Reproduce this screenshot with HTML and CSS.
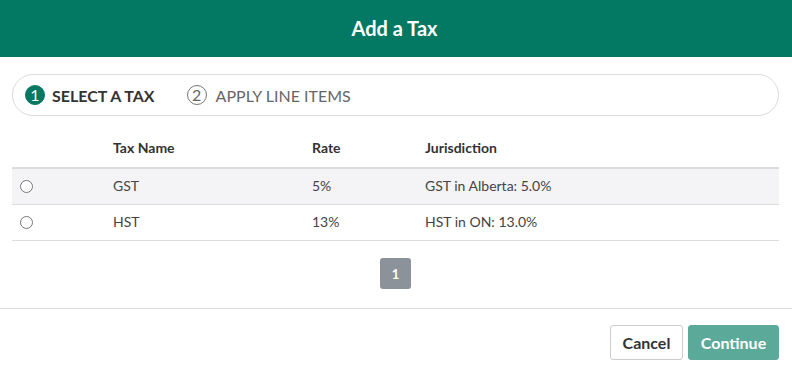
FILE: index.html
```html
<!DOCTYPE html>
<html>
<head>
<meta charset="utf-8">
<link rel="stylesheet" href="styles.css">
</head>
<body>
<div class="modal">
  <header class="modal-header">Add a Tax</header>
  <div class="modal-body">
    <div class="stepper">
      <div class="step active"><span class="step-num">1</span><span class="step-label">SELECT A TAX</span></div>
      <div class="step pending"><span class="step-num">2</span><span class="step-label">APPLY LINE ITEMS</span></div>
    </div>
    <div class="table">
      <div class="row head">
        <div class="cell"></div>
        <div class="cell">Tax Name</div>
        <div class="cell">Rate</div>
        <div class="cell">Jurisdiction</div>
      </div>
      <div class="row body-row striped">
        <div class="cell"><span class="radio"></span></div>
        <div class="cell">GST</div>
        <div class="cell">5%</div>
        <div class="cell">GST in Alberta: 5.0%</div>
      </div>
      <div class="row body-row">
        <div class="cell"><span class="radio"></span></div>
        <div class="cell">HST</div>
        <div class="cell">13%</div>
        <div class="cell">HST in ON: 13.0%</div>
      </div>
    </div>
    <div class="pagination"><span class="page current">1</span></div>
  </div>
  <footer class="modal-footer">
    <button class="btn btn-default">Cancel</button>
    <button class="btn btn-primary">Continue</button>
  </footer>
</div>
</body>
</html>
```
FILE: styles.css
```css
* { box-sizing: border-box; }
html, body { margin: 0; padding: 0; background: #fff; }
body { font-family: Lato, "Open Sans", sans-serif; color: #333; width: 792px; }
.modal-header {
  height: 57px;
  background: #037862;
  color: #fff;
  font-weight: 700;
  font-size: 20px;
  display: flex;
  align-items: center;
  justify-content: center;
  padding-bottom: 1px;
  padding-right: 3px;
}
.modal-body { padding: 17px 13px 19px 12px; }
.stepper {
  height: 42px;
  border: 1px solid #dcdcdc;
  border-radius: 21px;
  display: flex;
  align-items: center;
  padding-left: 12px;
  gap: 32px;
}
.step { display: flex; align-items: center; gap: 7px; color: #666; font-size: 16px; }
.step.pending { gap: 9px; }
.step-num {
  width: 20px; height: 20px; border-radius: 50%;
  border: 1px solid #777;
  display: flex; align-items: center; justify-content: center;
  font-size: 16px; color: #666; line-height: 1; font-weight: 400;
}
.step.active { color: #333; font-weight: 700; }
.step.active .step-num { background: #037862; border-color: #037862; color: #fff; }
.table { margin-top: 9px; font-size: 14px; }
.row { display: grid; grid-template-columns: 101px 199px 113px 1fr; align-items: center; }
.row.head { height: 44px; border-bottom: 2px solid #dcdcdc; font-weight: 700; padding-top: 3px; }
.body-row { height: 36px; border-bottom: 1px solid #dcdcdc; color: #444; padding-bottom: 2px; }
.striped { background: #f4f4f6; }
.radio {
  display: block; width: 13px; height: 13px; border-radius: 50%;
  border: 1px solid #777; background: #fff; margin-left: 8px; margin-top: 2px;
}
.pagination { display: flex; justify-content: center; margin-top: 17px; }
.page {
  width: 31px; height: 31px; border-radius: 3px;
  background: #8b9299; color: #fff; font-size: 13px; font-weight: 700;
  display: flex; align-items: center; justify-content: center;
}
.modal-footer {
  border-top: 1px solid #dcdcdc;
  display: flex; justify-content: flex-end; gap: 5px;
  padding: 16px 13px 10px 0;
}
.btn {
  font-family: Lato, sans-serif; font-weight: 700; font-size: 16px;
  height: 35px; border-radius: 3px; cursor: pointer;
}
.btn-default { width: 73px; background: #fff; border: 1px solid #ccc; color: #333; }
.btn-primary { width: 91px; background: #5aa999; border: 1px solid #5aa999; color: #fff; }
```
